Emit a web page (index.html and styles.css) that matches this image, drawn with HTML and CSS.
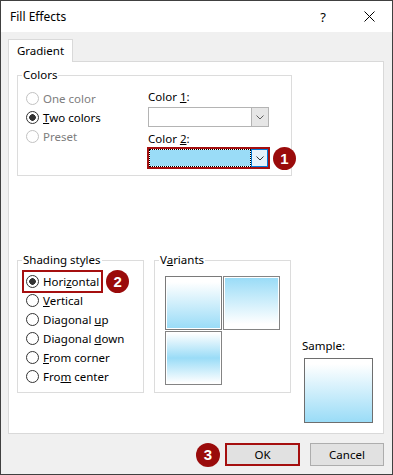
FILE: index.html
```html
<!DOCTYPE html>
<html lang="en">
<head>
    <meta charset="UTF-8">
    <title>Fill Effects</title>
    <link rel="stylesheet" href="styles.css">
</head>
<body>
    <div class="window">
        <!-- Title bar -->
        <div class="titlebar">
            <span class="title">Fill Effects</span>
            <span class="caption-btn help">?</span>
            <span class="caption-btn close">
                <svg width="11" height="11" viewBox="0 0 11 11"><path d="M0.5 0.5 L10.5 10.5 M10.5 0.5 L0.5 10.5" stroke="#000" stroke-width="1" fill="none"/></svg>
            </span>
        </div>

        <div class="content">
            <div class="tabs">
                <div class="tab">Gradient</div>
            </div>

            <div class="panel">
                <!-- Colors -->
                <div class="group colors">
                    <div class="group-title">Colors</div>
                    <div class="colors-grid">
                        <div class="options">
                            <div class="opt disabled"><span class="radio"></span>One color</div>
                            <div class="opt"><span class="radio checked"></span><span><u>T</u>wo colors</span></div>
                            <div class="opt disabled"><span class="radio"></span>Preset</div>
                        </div>
                        <div class="pickers">
                            <div class="field-label">Color <u>1</u>:</div>
                            <div class="combo">
                                <span class="combo-value"></span>
                                <span class="combo-btn">
                                    <svg width="8" height="5" viewBox="0 0 8 5"><path d="M0.5 0.5 L4 4 L7.5 0.5" stroke="#606060" fill="none"/></svg>
                                </span>
                            </div>
                            <div class="field-label second">Color <u>2</u>:</div>
                            <div class="combo focused marked">
                                <span class="combo-value"><span class="swatch"></span></span>
                                <span class="combo-btn">
                                    <svg width="8" height="5" viewBox="0 0 8 5"><path d="M0.5 0.5 L4 4 L7.5 0.5" stroke="#333" fill="none"/></svg>
                                </span>
                                <span class="badge badge-right">1</span>
                            </div>
                        </div>
                    </div>
                </div>

                <div class="lower">
                    <!-- Shading styles -->
                    <div class="group shading">
                        <div class="group-title">Shading styles</div>
                        <div class="options">
                            <div class="opt marked"><span class="radio checked"></span><span>Hori<u>z</u>ontal</span><span class="badge badge-right">2</span></div>
                            <div class="opt"><span class="radio"></span><span><u>V</u>ertical</span></div>
                            <div class="opt"><span class="radio"></span><span>Diagonal <u>u</u>p</span></div>
                            <div class="opt"><span class="radio"></span><span>Diagonal <u>d</u>own</span></div>
                            <div class="opt"><span class="radio"></span><span><u>F</u>rom corner</span></div>
                            <div class="opt"><span class="radio"></span><span>Fro<u>m</u> center</span></div>
                        </div>
                    </div>

                    <!-- Variants -->
                    <div class="group variants">
                        <div class="group-title">V<u>a</u>riants</div>
                        <div class="tiles">
                            <div class="tile selected"><div class="fill grad-down"></div></div>
                            <div class="tile"><div class="fill grad-up"></div></div>
                            <div class="tile"><div class="fill grad-mid"></div></div>
                        </div>
                    </div>

                    <!-- Sample -->
                    <div class="sample">
                        <div class="sample-label">Sample:</div>
                        <div class="sample-box grad-down"></div>
                    </div>
                </div>
            </div>

            <div class="buttons">
                <button class="btn ok marked">OK<span class="badge badge-left">3</span></button>
                <button class="btn">Cancel</button>
            </div>
        </div>
    </div>
</body>
</html>
```

FILE: styles.css
```css
* {
    margin: 0;
    padding: 0;
    box-sizing: border-box;
}

body {
    font-family: "Noto Sans", "Segoe UI", sans-serif;
    font-size: 11.5px;
    color: #000;
    background: #fff;
}

u {
    text-underline-offset: 1px;
}

/* Window frame */
.window {
    width: 393px;
    height: 475px;
    border: 1px solid #404040;
    background: #f0f0f0;
    display: flex;
    flex-direction: column;
}

.titlebar {
    height: 31px;
    flex-shrink: 0;
    background: #fff;
    display: flex;
    align-items: center;
}

.title {
    padding-left: 9px;
    font-size: 12px;
}

.caption-btn {
    width: 46px;
    height: 31px;
    display: flex;
    align-items: center;
    justify-content: center;
}

.caption-btn.help {
    margin-left: auto;
    font-size: 13px;
}

.content {
    padding: 7px 8px 0 7px;
}

/* Tabs */
.tabs {
    display: flex;
}

.tab {
    position: relative;
    z-index: 1;
    width: 65px;
    height: 23px;
    margin-bottom: -1px;
    border: 1px solid #d9d9d9;
    border-bottom: none;
    background: #fff;
    text-align: center;
    line-height: 22px;
}

.panel {
    height: 373px;
    border: 1px solid #d9d9d9;
    background: #fff;
    padding: 13px 8px 0;
}

/* Group boxes */
.group {
    border: 1px solid #dcdcdc;
}

.group-title {
    width: fit-content;
    margin: -9px 0 0 -4px;
    padding: 0 1px;
    background: #fff;
    line-height: 16px;
}

.colors {
    width: 275px;
    height: 101px;
    padding: 0 8px;
}

.colors-grid {
    display: grid;
    grid-template-columns: 122px 1fr;
    margin-top: 6px;
}

/* Radio options */
.opt {
    display: flex;
    align-items: center;
    gap: 4px;
    height: 19px;
    width: fit-content;
}

.opt.disabled {
    color: #7d7d7d;
}

.radio {
    width: 13px;
    height: 13px;
    flex-shrink: 0;
    border: 1px solid #333;
    border-radius: 50%;
    background: #fff;
}

.radio.checked {
    background: radial-gradient(circle, #333 0 3px, #fff 3.6px);
}

.opt.disabled .radio {
    border-color: #c2c2c2;
}

/* Color pickers */
.field-label {
    line-height: 15px;
}

.field-label.second {
    margin-top: 4px;
}

.combo {
    position: relative;
    display: flex;
    width: 121px;
    height: 20px;
    margin-top: 3px;
    border: 1px solid #b4b4b4;
    background: #fff;
}

.combo.focused {
    margin-top: 2px;
}

.combo-value {
    flex: 1;
    padding: 1px;
}

.swatch {
    display: block;
    height: 100%;
    background: #9adcf7;
    outline: 1px dotted #000;
    outline-offset: 0;
}

.combo-btn {
    width: 17px;
    display: flex;
    align-items: center;
    justify-content: center;
    border-left: 1px solid #b4b4b4;
    background: #e6e6e6;
}

.combo.focused .combo-btn {
    border: 1px solid #0078d7;
    background: #e5f1fb;
}

/* Annotations */
.marked {
    position: relative;
    border-color: #a50f0f;
    box-shadow: 0 0 0 1px #a50f0f;
}

.opt.marked {
    box-shadow: none;
    outline: 2px solid #a50f0f;
    margin-left: -2px;
    padding: 0 2px;
}

.badge {
    position: absolute;
    top: 50%;
    width: 23px;
    height: 23px;
    margin-top: -11.5px;
    border-radius: 50%;
    background: #9a0b0b;
    color: #fff;
    font: bold 15px "Liberation Sans", Arial, sans-serif;
    display: flex;
    align-items: center;
    justify-content: center;
}

.badge-right {
    left: calc(100% + 5px);
}

.badge-left {
    right: calc(100% + 7px);
    width: 24px;
    height: 24px;
    margin-top: -12px;
}

/* Lower row */
.lower {
    display: flex;
    align-items: flex-start;
    gap: 10px;
    margin-top: 84px;
}

.shading {
    width: 127px;
    height: 133px;
    padding: 0 8px;
}

.shading .options {
    margin-top: 4px;
}

.variants {
    width: 137px;
    height: 133px;
    padding: 0 10px;
}

.variants .group-title {
    margin-left: -6px;
}

.tiles {
    display: grid;
    grid-template-columns: 57px 57px;
    grid-auto-rows: 54px;
    gap: 1px;
    margin-top: 8px;
}

.tile {
    border: 1px solid #848484;
    padding: 1px;
    background: #fff;
}

.tile.selected {
    border-color: #7a7a7a;
}

.fill {
    height: 100%;
}

.grad-down {
    background: linear-gradient(#fff 8%, #9adcf7 100%);
}

.grad-up {
    background: linear-gradient(#9adcf7 0%, #fff 92%);
}

.grad-mid {
    background: linear-gradient(#fff 0%, #9adcf7 50%, #fff 100%);
}

.sample {
    margin-left: 1px;
    margin-top: 78px;
}

.sample-label {
    line-height: 16px;
}

.sample-box {
    width: 69px;
    height: 65px;
    margin: 4px 0 0 2px;
    border: 1px solid #6e6e6e;
}

/* Dialog buttons */
.buttons {
    display: flex;
    justify-content: flex-end;
    gap: 10px;
    margin-top: 9px;
}

.btn {
    width: 74px;
    height: 23px;
    border: 1px solid #adadad;
    background: #e1e1e1;
    font-family: inherit;
    font-size: 11.5px;
    color: #000;
}

.btn.ok {
    width: 75px;
    border: 2px solid #a50f0f;
    box-shadow: none;
}
```
